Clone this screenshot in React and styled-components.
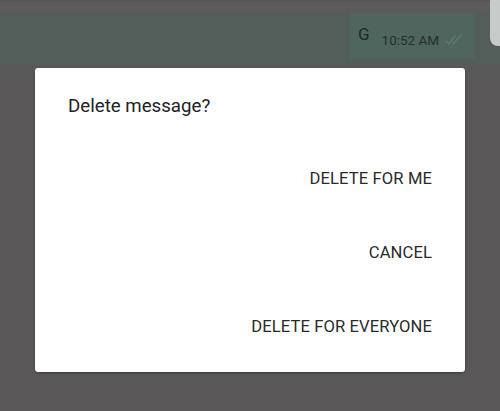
import React from 'react';
import styled, { createGlobalStyle } from 'styled-components';

const GlobalStyle = createGlobalStyle`
  html, body {
    margin: 0;
    padding: 0;
    background: #5a5859;
  }
  body {
    font-family: Roboto, "Noto Sans", "Liberation Sans", sans-serif;
  }
`;

const Screen = styled.div`
  position: relative;
  width: 500px;
  height: 411px;
  overflow: hidden;
  background: #5a5859;
  display: flex;
  flex-direction: column;
`;

const TopStrip = styled.div`
  height: 13px;
  background: #5d5a5b;
  border-top: 2px solid #575556;
  box-sizing: border-box;
`;

const MessageRow = styled.div`
  height: 52px;
  background: #535d59;
  display: flex;
  justify-content: flex-end;
  padding-right: 25px;
`;

const Bubble = styled.div`
  width: 125px;
  height: 46px;
  background: #4f665e;
  display: flex;
  align-items: center;
  gap: 12px;
  padding-left: 8px;
  box-sizing: border-box;
  color: #1f2b27;
`;

const Initial = styled.span`
  font-size: 17px;
  line-height: 1;
  margin-top: -3px;
`;

const Meta = styled.span`
  display: flex;
  align-items: center;
  gap: 6px;
  font-size: 13.5px;
  margin-top: 7px;
  color: #23302c;
`;

const SidePanel = styled.div`
  position: absolute;
  top: 0;
  right: 0;
  width: 10px;
  height: 46px;
  background: #c7cbca;
  border-bottom-left-radius: 8px;
`;

const Dialog = styled.div`
  width: 430px;
  margin: 3px 0 0 35px;
  background: #ffffff;
  border-radius: 3px;
  box-shadow: 0 1px 3px rgba(0, 0, 0, 0.35);
  padding: 26px 33px 9px 33px;
  box-sizing: border-box;
`;

const Title = styled.h2`
  margin: 0 0 23px 0;
  font-weight: 400;
  font-size: 18.7px;
  line-height: 24px;
  color: #222222;
`;

const Actions = styled.div`
  display: flex;
  flex-direction: column;
  align-items: flex-end;
`;

const ActionButton = styled.button`
  height: 74px;
  border: none;
  background: transparent;
  padding: 0;
  font-family: inherit;
  font-size: 16.6px;
  font-weight: 400;
  letter-spacing: 0.1px;
  color: #2a2a2a;
  cursor: pointer;
`;

const Ticks = () => (
  <svg width="18" height="12" viewBox="0 0 18 12" fill="none" stroke="#5e7a71" strokeWidth="1.4" strokeLinecap="round">
    <path d="M1 7l3 3 6-8" />
    <path d="M8 10l8-9" />
  </svg>
);

export default function App() {
  return (
    <>
      <GlobalStyle />
      <Screen>
        <TopStrip />
        <MessageRow>
          <Bubble>
            <Initial>G</Initial>
            <Meta>
              10:52 AM
              <Ticks />
            </Meta>
          </Bubble>
        </MessageRow>
        <SidePanel />
        <Dialog>
          <Title>Delete message?</Title>
          <Actions>
            <ActionButton>DELETE FOR ME</ActionButton>
            <ActionButton>CANCEL</ActionButton>
            <ActionButton>DELETE FOR EVERYONE</ActionButton>
          </Actions>
        </Dialog>
      </Screen>
    </>
  );
}
